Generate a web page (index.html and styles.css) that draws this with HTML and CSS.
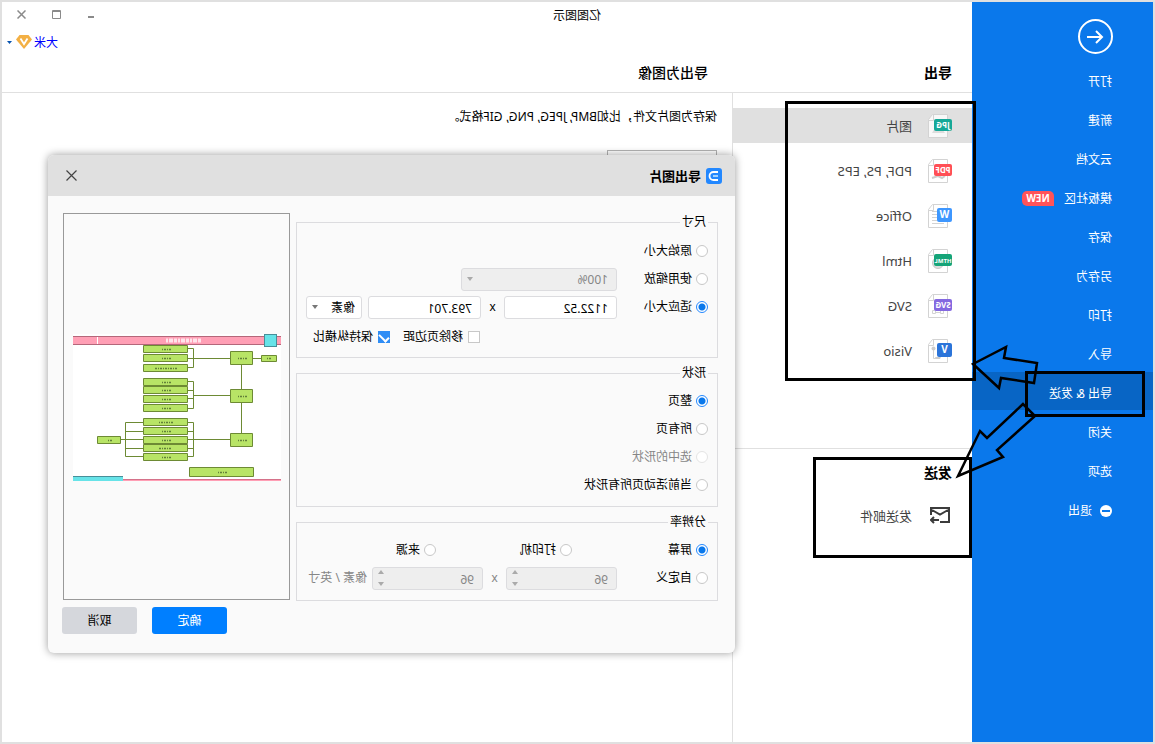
FILE: index.html
```html
<!DOCTYPE html>
<html lang="zh-CN">
<head>
<meta charset="utf-8">
<title>亿图图示</title>
<link rel="stylesheet" href="styles.css">
</head>
<body>
<div class="window">
  <nav class="sidebar">
    <button class="back" type="button" aria-label="返回">
      <svg width="35" height="35" viewBox="0 0 35 35" fill="none" stroke="#fff" stroke-width="2"><circle cx="17.500" cy="17.500" r="16.500"/><path d="M26 18H11M17 12l-6 6 6 6"/></svg>
    </button>
    <ul class="menu">
      <li><a href="#">打开</a></li>
      <li><a href="#">新建</a></li>
      <li><a href="#">云文档</a></li>
      <li><a href="#">模板社区<span class="new">NEW</span></a></li>
      <li><a href="#">保存</a></li>
      <li><a href="#">另存为</a></li>
      <li><a href="#">打印</a></li>
      <li><a href="#">导入</a></li>
      <li><a class="current" href="#">导出 &amp; 发送</a></li>
      <li><a href="#">关闭</a></li>
      <li><a href="#">选项</a></li>
      <li><a class="exit" href="#"><svg width="12" height="12" viewBox="0 0 12 12"><circle cx="6" cy="6" r="6" fill="#fff"/><path d="M2 6h8" stroke="#0a78eb" stroke-width="2"/></svg>退出</a></li>
    </ul>
  </nav>

  <div class="workspace">
    <header class="titlebar">
      <div class="app-title">亿图图示</div>
      <div class="controls">
        <button type="button" aria-label="最小化"><svg width="9" height="9" viewBox="0 0 9 9"><path d="M2 7h6" stroke="#8a8a8a" stroke-width="2"/></svg></button>
        <button type="button" aria-label="最大化"><svg width="9" height="9" viewBox="0 0 9 9" fill="none" stroke="#8a8a8a"><path d="M.5.500h8v8h-8zM0 1.500h9"/></svg></button>
        <button type="button" aria-label="关闭"><svg width="9" height="9" viewBox="0 0 9 9" stroke="#8a8a8a" stroke-width="1.500"><path d="M.5.500l8 8M8.500.500l-8 8"/></svg></button>
      </div>
    </header>
    <div class="userbar">
      <a href="#">大米</a>
      <svg width="16" height="14" viewBox="0 0 16 14"><path d="M3.500 0h9L16 4.500 8 14 0 4.500z" fill="#f3b044"/><path d="M4.500 3.500L8 9l3.500-5.500" fill="none" stroke="#fff" stroke-width="1.800"/></svg>
      <svg class="caret" width="5" height="3" viewBox="0 0 5 3"><path d="M0 0h5L2.500 3z" fill="#0754b0"/></svg>
    </div>
    <div class="headings">
      <h2>导出</h2>
      <h2>导出为图像</h2>
    </div>

    <div class="panes">
      <aside class="formats">
        <ul class="list">
          <li><a class="selected" href="#">
            <svg class="file" viewBox="0 0 24 24"><path class="page" d="M4.500.500h15l4 5v18h-19z"/><path class="page" d="M18.500.500v6h5"/><path d="M7 19l5-7 3 4 2-2 3 5z" fill="#ddd"/><rect y="5" width="18" height="12" rx="2" fill="#16a897"/><text x="9" y="14">JPG</text></svg>图片</a></li>
          <li><a href="#">
            <svg class="file" viewBox="0 0 24 24"><path class="page" d="M4.500.500h15l4 5v18h-19z"/><path class="page" d="M18.500.500v6h5"/><path d="M7 17l3 2 4-2 6 2" stroke="#ccc" stroke-width="2" fill="none"/><rect y="5" width="18" height="12" rx="2" fill="#ff4f55"/><text x="9" y="14">PDF</text></svg>PDF, PS, EPS</a></li>
          <li><a href="#">
            <svg class="file" viewBox="0 0 24 24"><path class="page" d="M4.500.500h15l4 5v18h-19z"/><path class="page" d="M18.500.500v6h5M15 7.500h5M15 10.500h5M15 13.500h5M15 16.500h5M8 19.500h12"/><rect y="4" width="15" height="14" rx="2" fill="#3e97ff"/><text class="big" x="7.500" y="14">W</text></svg>Office</a></li>
          <li><a href="#">
            <svg class="file" viewBox="0 0 24 24"><path class="page" d="M4.500.500h15l4 5v18h-19z"/><path class="page" d="M18.500.500v6h5"/><circle cx="14" cy="14" r="5.500" fill="#ddd" stroke="#c8c8c8"/><rect y="5" width="18" height="12" rx="2" fill="#15a478"/><text class="small" x="9" y="14">HTML</text></svg>Html</a></li>
          <li><a href="#">
            <svg class="file" viewBox="0 0 24 24"><path class="page" d="M4.500.500h15l4 5v18h-19z"/><path class="page" d="M18.500.500v6h5M8.500 17v2.500h3V17M16.500 17v2.500h3v-3h-2M11 18.500h6"/><rect y="5" width="18" height="12" rx="2" fill="#8468e0"/><text x="9" y="14">SVG</text></svg>SVG</a></li>
          <li><a href="#">
            <svg class="file" viewBox="0 0 24 24"><path class="page" d="M4.500.500h15l4 5v18h-19z"/><path class="page" d="M18.500.500v6h5M18.500 10v9.500H14"/><circle cx="18.500" cy="9.500" r="2" fill="#ccc"/><path d="M11 18h6l-1 2h-4z" fill="#ccc"/><rect y="4" width="15" height="14" rx="2" fill="#2b74d9"/><text class="big" x="7.500" y="14">V</text></svg>Visio</a></li>
        </ul>
        <section class="send">
          <h2>发送</h2>
          <a href="#"><svg width="20" height="17" viewBox="0 0 20 17" fill="none" stroke="#3c3c3c" stroke-width="2"><path d="M10 15H1V1h18v7M2 3l8 4.500L18 3M11 13h8M16 10l3 3-3 3"/></svg>发送邮件</a>
        </section>
      </aside>
      <main class="detail">
        <p>保存为图片文件，比如BMP, JPEG, PNG, GIF格式。</p>
        <button type="button" aria-label="导出为图像"></button>
      </main>
    </div>
  </div>

  <form class="dialog">
    <header class="dialog-title">
      <svg width="16" height="16" viewBox="0 0 16 16"><rect width="16" height="16" rx="3" fill="#2388ff"/><path d="M4 4h4.500a4 4 0 0 1 0 8H4" fill="none" stroke="#fff" stroke-width="1.800"/><path d="M4 8h5" stroke="#b5dcff" stroke-width="1.800"/></svg>
      <h3>导出图片</h3>
      <button type="button" aria-label="关闭"><svg width="11" height="11" viewBox="0 0 11 11" stroke="#444" stroke-width="1.200"><path d="M.5.500l10 10M10.500.500l-10 10"/></svg></button>
    </header>
    <div class="dialog-body">
      <div class="options">
        <fieldset class="size">
          <legend>尺寸</legend>
          <div class="row"><label class="opt"><input type="radio" name="size">原始大小</label></div>
          <div class="row"><label class="opt"><input type="radio" name="size">使用缩放</label>
            <span class="pick scale"><select disabled aria-label="缩放比例"><option>100%</option></select></span></div>
          <div class="row"><label class="opt"><input type="radio" name="size" checked>适应大小</label>
            <input class="num" type="text" value="1122.52" aria-label="宽度"><span class="times">x</span><input class="num" type="text" value="793.701" aria-label="高度">
            <span class="pick unit"><select aria-label="单位"><option>像素</option></select></span></div>
          <div class="row checks"><label><input type="checkbox">移除页边距</label><label><input type="checkbox" checked>保持纵横比</label></div>
        </fieldset>
        <fieldset class="shape">
          <legend>形状</legend>
          <div class="row"><label><input type="radio" name="shape" checked>整页</label></div>
          <div class="row"><label><input type="radio" name="shape">所有页</label></div>
          <div class="row"><label class="off"><input type="radio" name="shape" disabled>选中的形状</label></div>
          <div class="row"><label><input type="radio" name="shape">当前活动页所有形状</label></div>
        </fieldset>
        <fieldset class="resolution">
          <legend>分辨率</legend>
          <div class="row modes"><label><input type="radio" name="res" checked>屏幕</label><label><input type="radio" name="res">打印机</label><label><input type="radio" name="res">来源</label></div>
          <div class="row"><label class="opt"><input type="radio" name="res">自定义</label>
            <span class="spin"><input type="text" value="96" disabled aria-label="水平分辨率"></span><span class="times off">x</span><span class="spin"><input type="text" value="96" disabled aria-label="垂直分辨率"></span><span class="per off">像素 / 英寸</span></div>
        </fieldset>
      </div>
      <div class="side">
        <div class="preview">
          <svg viewBox="0 0 208 147" role="img" aria-label="预览">
            <rect width="208" height="147" fill="#fff"/>
            <path d="M0 2h208v9H0z" fill="#ff9fb5"/><path d="M0 2.500h208M0 10.500h208" stroke="#b4677a"/>
            <path d="M183.500 3v7" stroke="#fff"/><path d="M80 6.500h36" stroke="#ffe3ea" stroke-width="4" stroke-dasharray="3 1 4 1 2 1"/>
            <rect x="4.500" y=".5" width="12" height="12" fill="#67e3e8" stroke="#478f99"/>
            <g fill="none" stroke="#6d8a34">
              <path d="M20 24.500h8M39.500 31v24M39.500 69v30M51 24.500h36M93 14.500h-5.500v19H93M87.500 24.500H93M51 61.500h36M93 47.500h-5.500v27H93M87.500 56.500H93M87.500 64.500H93M51 105.500h36M93 88.500h-5.500v34H93M87.500 97.500H93M87.500 105.500H93M87.500 114.500H93M138 88.500h17.500v34H138M138 97.500h17.500M138 105.500h22M138 114.500h17.500"/>
            </g>
            <g fill="#b8e466" stroke="#6d8a34">
              <path d="M4.500 21.500h15v6h-15zM28.500 17.500h22v13h-22zM28.500 55.500h22v13h-22zM28.500 99.500h22v13h-22z"/>
              <path d="M93.500 11.500h44v7h-44zM93.500 20.500h44v7h-44zM93.500 30.500h44v7h-44zM93.500 44.500h44v7h-44zM93.500 52.500h44v7h-44zM93.500 61.500h44v7h-44zM93.500 70.500h44v7h-44zM93.500 84.500h44v7h-44zM93.500 93.500h44v7h-44zM93.500 102.500h44v7h-44zM93.500 110.500h44v7h-44zM93.500 119.500h44v7h-44z"/>
              <path d="M160.500 102.500h23v7h-23zM27.500 133.500h64v9h-64z"/>
            </g>
            <path d="M10 24.500h5M34 24.500h10M34 62.500h10M34 106.500h10M110 15.500h10M110 24.500h10M104 34.500h22M110 48.500h10M110 56.500h10M110 65.500h10M110 74.500h10M108 88.500h14M110 97.500h9M110 106.500h9M110 114.500h12M110 123.500h9M169 106.500h5M54 138.500h9" stroke="#62803a" stroke-width="1.500" stroke-dasharray="2 1 1 1"/>
            <path d="M0 145h158v2H0z" fill="#ff9fb5"/><path d="M0 145.500h158" stroke="#d5728a"/>
            <path d="M158 142h50v5h-50z" fill="#67e3e8"/><path d="M158 142.500h50" stroke="#478f99"/>
          </svg>
        </div>
        <div class="actions"><button class="ok" type="button">确定</button><button type="button">取消</button></div>
      </div>
    </div>
  </form>

  <svg class="notes" width="380" height="570" viewBox="0 0 380 570" fill="none" stroke="#000">
    <g stroke-width="3"><path d="M180.500 102.500h188v277h-188zM184.500 458.500h156v98h-156zM11.500 372.500h117v43h-117z"/></g>
    <path stroke-width="2.500" d="M182 364L149 347l2 11-33 5 3 20 33-5 2 10zM132 404l36 34 7-7 22 45-45-19 6-7-38-34z"/>
  </svg>
</div>
</body>
</html>
```
FILE: styles.css
```css
* { box-sizing: border-box; }
body {
  margin: 0;
  color: #000;
  font: 12px/16px "Noto Sans", "Noto Sans CJK SC", sans-serif;
}
h2, h3, p, ul { margin: 0; padding: 0; font-size: 14px; }
ul { list-style: none; }
a { color: inherit; text-decoration: none; }
button, input, select { font: inherit; color: inherit; }
button { border: 0; padding: 0; background: none; }
svg { display: block; flex: none; }

/* The whole window is shown mirrored. */
.window {
  position: relative;
  display: grid;
  grid-template-columns: 181px 1fr;
  min-height: 100vh;
  border: 2px solid #e0e0e0;
  background: #fff;
  transform: scaleX(-1);
}

.sidebar { background: #0a78eb; color: #fff; }
.back { display: block; margin: 17px 0 0 40px; }
.menu { margin-top: 6px; font-size: 12px; }
.menu a {
  display: flex;
  align-items: center;
  height: 38px;
  margin-bottom: 1px;
  padding: 6px 0 0 41px;
}
.menu .current { background: #0865c5; }
.menu .exit { gap: 8px; }
.new {
  width: 32px;
  height: 15px;
  margin: 0 0 2px 10px;
  border-radius: 5px 5px 5px 0;
  background: #ff5359;
  font: bold 10px/15px "Noto Sans", sans-serif;
  text-align: center;
}

.workspace { display: flex; flex-direction: column; }
.titlebar { display: flex; height: 26px; }
.app-title { flex: 1; padding: 6px 86px 0 0; text-align: center; }
.controls { display: flex; align-items: center; gap: 26px; padding: 0 15px 2px 0; }
.userbar {
  display: flex;
  align-items: center;
  justify-content: flex-end;
  gap: 2px;
  height: 28px;
  padding-right: 5px;
}
.userbar a { padding-top: 2px; color: #00f; }
.caret { margin-left: 2px; }
.headings {
  display: grid;
  grid-template-columns: 240px 1fr;
  height: 37px;
  padding: 9px 0 0 20px;
  border-bottom: 1px solid #e0e0e0;
}
.headings h2 + h2 { padding-left: 4px; font-weight: 500; }
.panes { flex: 1; display: grid; grid-template-columns: 240px 1fr; }
.formats { border-right: 1px solid #e0e0e0; color: #444; }
.list { padding-top: 15px; font-size: 13px; }
.list a {
  display: flex;
  align-items: center;
  gap: 16px;
  height: 35px;
  margin-bottom: 10px;
  padding-left: 20px;
}
.list .selected { background: #e0e0e0; }
.file { width: 24px; height: 24px; }
.file .page { fill: #fff; stroke: #d3d3d3; }
.selected .page { fill: #f8f8f8; }
.file text {
  fill: #fff;
  font: bold 8px "Noto Sans", sans-serif;
  text-anchor: middle;
}
.file .small { font-size: 6px; }
.file .big { font-size: 10px; }
.send {
  margin-top: 80px;
  padding: 16px 0 0 20px;
  border-top: 1px solid #e0e0e0;
}
.send h2 { color: #000; }
.send a {
  display: flex;
  align-items: center;
  gap: 18px;
  margin-top: 26px;
  padding-left: 2px;
  font-size: 13px;
}
.detail { padding: 16px 15px; }
.detail p { font-size: 12px; }
.detail button {
  display: block;
  width: 110px;
  height: 30px;
  margin-top: 25px;
  border: 1px solid #b4b4b4;
}

.dialog {
  position: absolute;
  top: 153px;
  left: 418px;
  width: 687px;
  border-radius: 6px;
  background: #fafafa;
  box-shadow: 0 0 8px rgba(0, 0, 0, .4);
}
.dialog-title {
  display: flex;
  align-items: center;
  gap: 5px;
  height: 41px;
  padding: 0 18px 0 13px;
  border-radius: 6px 6px 0 0;
  background: #e0e0e0;
}
.dialog-title h3 { flex: 1; font-size: 13px; }
.dialog-body { display: flex; gap: 6px; padding: 17px 14px 19px 17px; }
.options { display: flex; flex-direction: column; width: 422px; padding-top: 1px; }
fieldset { margin: 0; padding: 0 0 0 9px; border: 1px solid #dcdcdf; }
legend { padding: 0 2px; line-height: 16px; }
.size { height: 144px; }
.shape { height: 142px; margin-top: 7px; }
.resolution { height: 87px; margin-top: 7px; }
.row { display: flex; align-items: center; height: 28px; }
.size .row:first-of-type { margin-top: 7px; }
.shape .row:first-of-type, .resolution .row:first-of-type { margin-top: 6px; }
label { display: flex; align-items: center; gap: 4px; }
.opt { width: 91px; }
.modes label { width: 136px; }
.checks { gap: 13px; margin-left: 228px; padding-top: 3px; }
.checks label { gap: 5px; }
.off { color: #868686; }
input[type="radio"], input[type="checkbox"] {
  appearance: none;
  width: 12px;
  height: 12px;
  margin: 0;
  border: 1px solid #c8c8c8;
  background: #fff;
}
input[type="radio"] { border-radius: 50%; }
input[type="radio"]:checked {
  border-color: #2388ff;
  background: radial-gradient(circle, #0a78eb 3px, #fff 4px);
}
input[type="radio"]:disabled { border-color: #e4e4e4; }
input[type="checkbox"]:checked {
  border-color: #2f8df5;
  background: #2f8df5;
  display: grid;
  place-items: center;
}
input[type="checkbox"]:checked::before {
  content: "";
  width: 8px;
  height: 4px;
  border: solid #fff;
  border-width: 0 0 2px 2px;
  transform: rotate(-45deg);
}
.num, .pick select, .spin input {
  appearance: none;
  height: 23px;
  margin: 0;
  padding: 2px 8px 0;
  border: 1px solid #dcdcdf;
  border-radius: 3px;
  background: #fff;
  line-height: 18px;
}
.num { width: 113px; }
.times { width: 23px; text-align: center; }
.pick, .spin { position: relative; }
.pick select { display: block; width: 100%; }
.scale { width: 156px; }
.unit { width: 56px; margin-left: 6px; }
.unit select { padding: 2px 6px 0; }
.pick select:disabled, .spin input:disabled { background: #eee; color: #868686; opacity: 1; }
.pick::after {
  content: "";
  position: absolute;
  top: 9px;
  right: 6px;
  border: solid transparent;
  border-width: 4px 3px 0;
  border-top-color: #777;
}
.scale::after { border-top-color: #aaa; }
.spin input { display: block; width: 111px; }
.spin::before, .spin::after {
  content: "";
  position: absolute;
  right: 6px;
  border: solid transparent;
}
.spin::before { top: 3px; border-width: 0 3px 4px; border-bottom-color: #aaa; }
.spin::after { bottom: 4px; border-width: 4px 3px 0; border-top-color: #aaa; }
.per { margin-left: 5px; }

.side { flex: 1; }
.preview {
  display: grid;
  place-items: center;
  height: 387px;
  margin-right: 1px;
  padding: 2px 9px 0 8px;
  border: 1px solid #999;
}
.preview svg { width: 100%; }
.actions { display: flex; justify-content: flex-end; gap: 15px; margin-top: 7px; }
.actions button {
  width: 75px;
  height: 27px;
  border-radius: 3px;
  background: #d5d7dc;
}
.actions .ok { background: #007fff; color: #fff; }
.notes { position: absolute; top: -2px; left: -2px; }
```
